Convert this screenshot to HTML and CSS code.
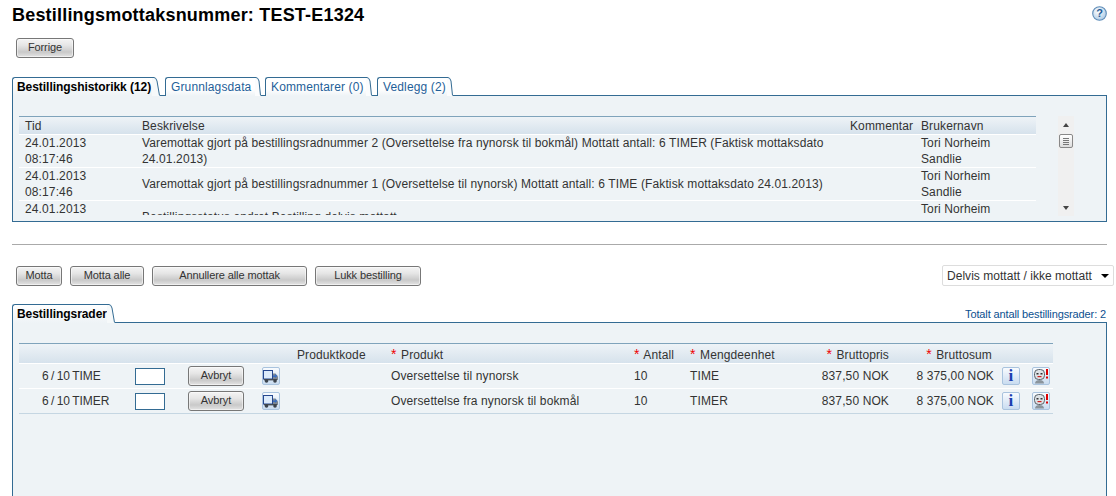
FILE: index.html
```html
<!DOCTYPE html>
<html lang="no">
<head>
<meta charset="utf-8">
<title>Bestillingsmottaksnummer: TEST-E1324</title>
<link rel="stylesheet" href="styles.css">
</head>
<body>
<div class="page">
  <header class="page-head">
    <h1>Bestillingsmottaksnummer: TEST-E1324</h1>
    <svg class="help" width="15" height="15" viewBox="0 0 15 15" aria-label="Hjelp">
      <defs><radialGradient id="hg" cx="40%" cy="35%" r="70%"><stop offset="0" stop-color="#ffffff"/><stop offset="1" stop-color="#a9c8e4"/></radialGradient></defs>
      <circle cx="7.5" cy="7.5" r="6.8" fill="url(#hg)" stroke="#5f8db8" stroke-width="1.1"/>
      <text x="7.5" y="11.4" text-anchor="middle" class="help-q">?</text>
    </svg>
  </header>

  <div class="back-row"><button class="btn btn-back">Forrige</button></div>

  <section class="history">
    <nav class="tabs">
      <div class="tab tab-active"><span class="tab-label">Bestillingshistorikk (12)</span><svg class="tab-end" width="8" height="19" viewBox="0 0 8 19"><path class="end-fill-a" d="M0 0H2Q4 0 5 4L8 19H0Z"/><path class="end-line" d="M0 .5H2Q4 .5 5 4L7.5 18.5"/></svg></div>
      <div class="tab tab-g1"><span class="tab-label">Grunnlagsdata</span><svg class="tab-end" width="6" height="19" viewBox="0 0 6 19"><path class="end-fill" d="M0 0H1Q3 0 4 4L6 19H0Z"/><path class="end-line" d="M0 .5H1Q3 .5 4 4L5.5 18.5"/></svg></div>
      <div class="tab tab-g2"><span class="tab-label">Kommentarer (0)</span><svg class="tab-end" width="6" height="19" viewBox="0 0 6 19"><path class="end-fill" d="M0 0H1Q3 0 4 4L6 19H0Z"/><path class="end-line" d="M0 .5H1Q3 .5 4 4L5.5 18.5"/></svg></div>
      <div class="tab tab-g3"><span class="tab-label">Vedlegg (2)</span><svg class="tab-end" width="6" height="19" viewBox="0 0 6 19"><path class="end-fill" d="M0 0H1Q3 0 4 4L6 19H0Z"/><path class="end-line" d="M0 .5H1Q3 .5 4 4L5.5 18.5"/></svg></div>
    </nav>
    <div class="panel panel-history">
      <div class="hist-scroll">
        <table class="grid hist-table">
          <colgroup><col class="h1"><col class="h2"><col class="h3"><col class="h4"></colgroup>
          <thead><tr><th>Tid</th><th>Beskrivelse</th><th>Kommentar</th><th>Brukernavn</th></tr></thead>
          <tbody>
            <tr><td>24.01.2013<br>08:17:46</td><td>Varemottak gjort på bestillingsradnummer 2 (Oversettelse fra nynorsk til bokmål) Mottatt antall: 6 TIMER (Faktisk mottaksdato 24.01.2013)</td><td></td><td>Tori Norheim<br>Sandlie</td></tr>
            <tr><td>24.01.2013<br>08:17:46</td><td>Varemottak gjort på bestillingsradnummer 1 (Oversettelse til nynorsk) Mottatt antall: 6 TIME (Faktisk mottaksdato 24.01.2013)</td><td></td><td>Tori Norheim<br>Sandlie</td></tr>
            <tr><td>24.01.2013<br>08:17:46</td><td>Bestillingsstatus endret Bestilling delvis mottatt</td><td></td><td>Tori Norheim<br>Sandlie</td></tr>
          </tbody>
        </table>
      </div>
      <div class="scrollbar">
        <span class="arrow-up"></span>
        <span class="thumb"><i></i><i></i><i></i><i></i></span>
        <span class="track"></span>
        <span class="arrow-down"></span>
      </div>
    </div>
  </section>

  <hr class="rule">

  <div class="toolbar">
    <button class="btn btn-motta">Motta</button>
    <button class="btn btn-alle">Motta alle</button>
    <button class="btn btn-annul">Annullere alle mottak</button>
    <button class="btn btn-lukk">Lukk bestilling</button>
    <div class="select"><span>Delvis mottatt / ikke mottatt</span><span class="caret"></span></div>
  </div>

  <section class="lines">
    <div class="lines-head">
      <div class="tab tab-active tab-lines"><span class="tab-label">Bestillingsrader</span><svg class="tab-end" width="8" height="19" viewBox="0 0 8 19"><path class="end-fill-a" d="M0 0H2Q4 0 5 4L8 19H0Z"/><path class="end-line" d="M0 .5H2Q4 .5 5 4L7.5 18.5"/></svg></div>
      <div class="total">Totalt antall bestillingsrader: 2</div>
    </div>
    <div class="panel panel-lines">
      <table class="grid line-table">
        <colgroup><col class="c1"><col class="c2"><col class="c3"><col class="c4"><col class="c5"><col class="c6"><col class="c7"><col class="c8"><col class="c9"><col class="c10"><col class="c11"><col class="c12"></colgroup>
        <thead>
          <tr><th></th><th></th><th></th><th></th><th>Produktkode</th><th><span class="req">*</span> Produkt</th><th><span class="req">*</span> Antall</th><th><span class="req">*</span> Mengdeenhet</th><th class="num"><span class="req">*</span> Bruttopris</th><th class="num sum"><span class="req">*</span> Bruttosum</th><th></th><th></th></tr>
        </thead>
        <tbody>
          <tr>
            <td class="qty">6 / 10 TIME</td><td><input class="qty-input" type="text" aria-label="Antall"></td><td><button class="btn btn-avbryt">Avbryt</button></td>
            <td><span class="ico"><svg width="16" height="15" viewBox="0 0 16 15"><rect x=".5" y="1.5" width="9" height="8.5" fill="#dcebfb" stroke="#25478f"/><path d="M10 4.5h2.5l2.5 3V11H10z" fill="#7d8791"/><rect x="1" y="10" width="13" height="1.4" fill="#444c55"/><circle cx="3.5" cy="12" r="1.8" fill="#3b434c"/><circle cx="12" cy="12" r="1.8" fill="#3b434c"/><path d="M10 6.500h2V5l2.500 2-2.500 2V8h-2z" fill="#3a6fc0"/></svg></span></td>
            <td></td><td>Oversettelse til nynorsk</td><td>10</td><td>TIME</td><td class="num">837,50 NOK</td><td class="num sum">8 375,00 NOK</td>
            <td><span class="ico ico-i">i</span></td>
            <td><span class="ico"><svg width="16" height="16" viewBox="0 0 16 16"><rect x="1.500" y="1.500" width="10" height="10" rx="4" fill="#dde2e6" stroke="#5a636a"/><rect x="3.500" y="5" width="2" height="1.500" fill="#333"/><rect x="7.500" y="5" width="2" height="1.500" fill="#333"/><rect x="4.500" y="8" width="4" height="1.200" fill="#c22"/><path d="M2 15.500q0-3.500 4.500-3.500t4.500 3.500z" fill="#8a949c"/><rect x="13" y="1" width="2" height="6" fill="#d00"/><rect x="13" y="8.500" width="2" height="2" fill="#d00"/></svg></span></td>
          </tr>
          <tr>
            <td class="qty">6 / 10 TIMER</td><td><input class="qty-input" type="text" aria-label="Antall"></td><td><button class="btn btn-avbryt">Avbryt</button></td>
            <td><span class="ico"><svg width="16" height="15" viewBox="0 0 16 15"><rect x=".5" y="1.5" width="9" height="8.5" fill="#dcebfb" stroke="#25478f"/><path d="M10 4.5h2.5l2.5 3V11H10z" fill="#7d8791"/><rect x="1" y="10" width="13" height="1.4" fill="#444c55"/><circle cx="3.5" cy="12" r="1.8" fill="#3b434c"/><circle cx="12" cy="12" r="1.8" fill="#3b434c"/><path d="M10 6.500h2V5l2.500 2-2.500 2V8h-2z" fill="#3a6fc0"/></svg></span></td>
            <td></td><td>Oversettelse fra nynorsk til bokmål</td><td>10</td><td>TIMER</td><td class="num">837,50 NOK</td><td class="num sum">8 375,00 NOK</td>
            <td><span class="ico ico-i">i</span></td>
            <td><span class="ico"><svg width="16" height="16" viewBox="0 0 16 16"><rect x="1.500" y="1.500" width="10" height="10" rx="4" fill="#dde2e6" stroke="#5a636a"/><rect x="3.500" y="5" width="2" height="1.500" fill="#333"/><rect x="7.500" y="5" width="2" height="1.500" fill="#333"/><rect x="4.500" y="8" width="4" height="1.200" fill="#c22"/><path d="M2 15.500q0-3.500 4.500-3.500t4.500 3.500z" fill="#8a949c"/><rect x="13" y="1" width="2" height="6" fill="#d00"/><rect x="13" y="8.500" width="2" height="2" fill="#d00"/></svg></span></td>
          </tr>
        </tbody>
      </table>
    </div>
  </section>
</div>
</body>
</html>
```
FILE: styles.css
```css
* { box-sizing: border-box; }
html, body { margin: 0; height: 496px; overflow: hidden; background: #fff; }
body { font: 12px/16px "Liberation Sans", Arial, sans-serif; color: #333; }
.page { padding: 0 9px 0 12px; }

.page-head { display: flex; justify-content: space-between; align-items: flex-start; height: 38px; padding-top: 3px; }
h1 { margin: 0; font-size: 18px; line-height: 24px; font-weight: bold; color: #000; letter-spacing: .2px; }
.help { margin: 3px 0 0 0; }
.help-q { font: bold 11px "Liberation Sans", sans-serif; fill: #1f5c96; }

.btn { display: block; height: 20px; padding: 0 0 2px; border: 1px solid #777; border-radius: 3px; font: 11px/16px "Liberation Sans", Arial, sans-serif; color: #333; letter-spacing: -.1px;
  background: linear-gradient(#f4f4f4 0, #e6e6e6 35%, #c9c9c9 72%, #e4e4e4 100%); box-shadow: inset 0 0 0 1px rgba(255,255,255,.5); }
.back-row { height: 39px; padding-left: 4px; }
.btn-back { width: 58px; }

.tabs { display: flex; height: 19px; position: relative; z-index: 1; }
.tab { display: flex; height: 19px; }
.tab-label { display: block; flex: 1; height: 19px; padding: 1px 0 0 5px; border: 1px solid #336b93; border-width: 1px 0 0 1px; border-top-left-radius: 3px; line-height: 17px; white-space: nowrap; letter-spacing: .13px; color: #1f5f99; background: linear-gradient(#fff, #fff 60%, #eef3f6); }
.tab-active .tab-label { padding-left: 4px; font-weight: bold; letter-spacing: -.05px; color: #000; background: linear-gradient(#fff, #eef3f6); }
.tab-end { display: block; flex: none; }
.end-fill { fill: #fbfcfd; }
.end-fill-a { fill: #f6f9fa; }
.end-line { fill: none; stroke: #336b93; stroke-width: 1; }
.tabs .tab-active { width: 148px; margin-right: 5px; }
.tab-g1, .tab-g2, .tab-g3 { border-bottom: 1px solid #336b93; }
.tab-g1 { width: 96px; margin-right: 4px; }
.tab-g2 { width: 107px; margin-right: 5px; }
.tab-g3 { width: 76px; }

.panel { border: 1px solid #336b93; background: #eef3f6; }
.panel-history { display: flex; height: 127px; margin-top: -1px; padding: 20px 32px 5px 6px; justify-content: space-between; }
.hist-scroll { width: 1017px; height: 99px; overflow: hidden; }

.grid { width: 100%; table-layout: fixed; border-collapse: separate; border-spacing: 0; letter-spacing: .12px; }
.grid th { height: 18px; padding: 1px 6px 0; text-align: left; font-weight: normal; white-space: nowrap; border-top: 1px solid #7fa3bb; background: linear-gradient(#eef3f7, #d6e2ec); color: #333; }
.grid td { padding: 0 6px; vertical-align: middle; border-top: 1px solid #fff; }
.hist-table tbody td { height: 33px; padding-top: 1px; line-height: 15.5px; }
.h1 { width: 117px; } .h2 { width: 708px; } .h3 { width: 71px; } .h4 { width: 121px; }

.scrollbar { display: flex; flex-direction: column; align-items: center; width: 16px; height: 100px; background: #f0f0f0; padding-top: 7px; }
.arrow-up, .arrow-down { width: 0; height: 0; border-left: 3.5px solid transparent; border-right: 3.5px solid transparent; flex: none; }
.arrow-up { border-bottom: 4px solid #444; }
.arrow-down { border-top: 4px solid #444; margin-bottom: 6px; }
.thumb { display: flex; flex-direction: column; justify-content: center; gap: 1px; width: 14px; height: 14px; margin-top: 7px; padding: 0 3px; border: 1px solid #888; border-radius: 2px; background: linear-gradient(#fff, #ddd); flex: none; }
.thumb i { display: block; height: 1px; background: #777; }
.track { flex: 1; }

.rule { height: 1px; margin: 22px 0 0; border: 0; background: #aaa; }

.toolbar { display: flex; align-items: center; gap: 8px; height: 21px; margin-top: 20px; padding-left: 4px; }
.btn-motta { width: 46px; }
.btn-alle { width: 74px; }
.btn-annul { width: 155px; }
.btn-lukk { width: 106px; }
.select { display: flex; justify-content: space-between; align-items: center; width: 172px; height: 21px; margin: 0 -7px 0 auto; padding: 0 4px 0 4px; background: #fff; border: 1px solid #ddd; border-radius: 2px; color: #333; letter-spacing: .03px; }
.caret { width: 0; height: 0; border-left: 4px solid transparent; border-right: 4px solid transparent; border-top: 4px solid #000; }

.lines { margin-top: 18px; }
.lines-head { display: flex; justify-content: space-between; align-items: flex-end; height: 19px; position: relative; z-index: 1; }
.lines-head .tab-lines { width: 103px; }
.total { font-size: 11px; line-height: 14px; padding: 0 1px 2px 0; letter-spacing: -.12px; color: #0b4f8f; }
.panel-lines { height: 174px; margin-top: -1px; padding: 20px 0 0 6px; border-bottom: 0; }
.line-table { width: 1034px; }
.line-table th { height: 20px; padding-top: 2px; }
.line-table tbody td { height: 25px; }
.line-table tbody tr:last-child td { height: 26px; border-bottom: 1px solid #c5d6e2; }
.c1 { width: 110px; } .c2 { width: 53px; } .c3 { width: 74px; } .c4 { width: 35px; } .c5 { width: 94px; } .c6 { width: 243px; } .c7 { width: 56px; } .c8 { width: 116px; } .c9 { width: 95px; } .c10 { width: 101px; } .c11 { width: 30px; } .c12 { width: 27px; }
.grid .num { text-align: right; }
.grid td.sum { padding-right: 2px; }
.grid th.sum { padding-right: 4px; }
.grid .qty { padding-left: 23px; white-space: nowrap; letter-spacing: 0; word-spacing: -1px; }
.req { color: #e00; font-size: 14px; line-height: 0; margin-right: 1px; }
.qty-input { display: block; width: 30px; height: 17px; padding: 0; border: 1px solid #336b93; background: #fff; }
.btn-avbryt { width: 56px; }
.ico { display: flex; align-items: center; justify-content: center; width: 18px; height: 18px; border: 1px solid #a9c3de; border-radius: 2px; background: linear-gradient(#f8fbfe, #c9dcf0); }
.ico-i { font: bold 17px/16px "Liberation Serif", serif; color: #1d3fb0; }
```
